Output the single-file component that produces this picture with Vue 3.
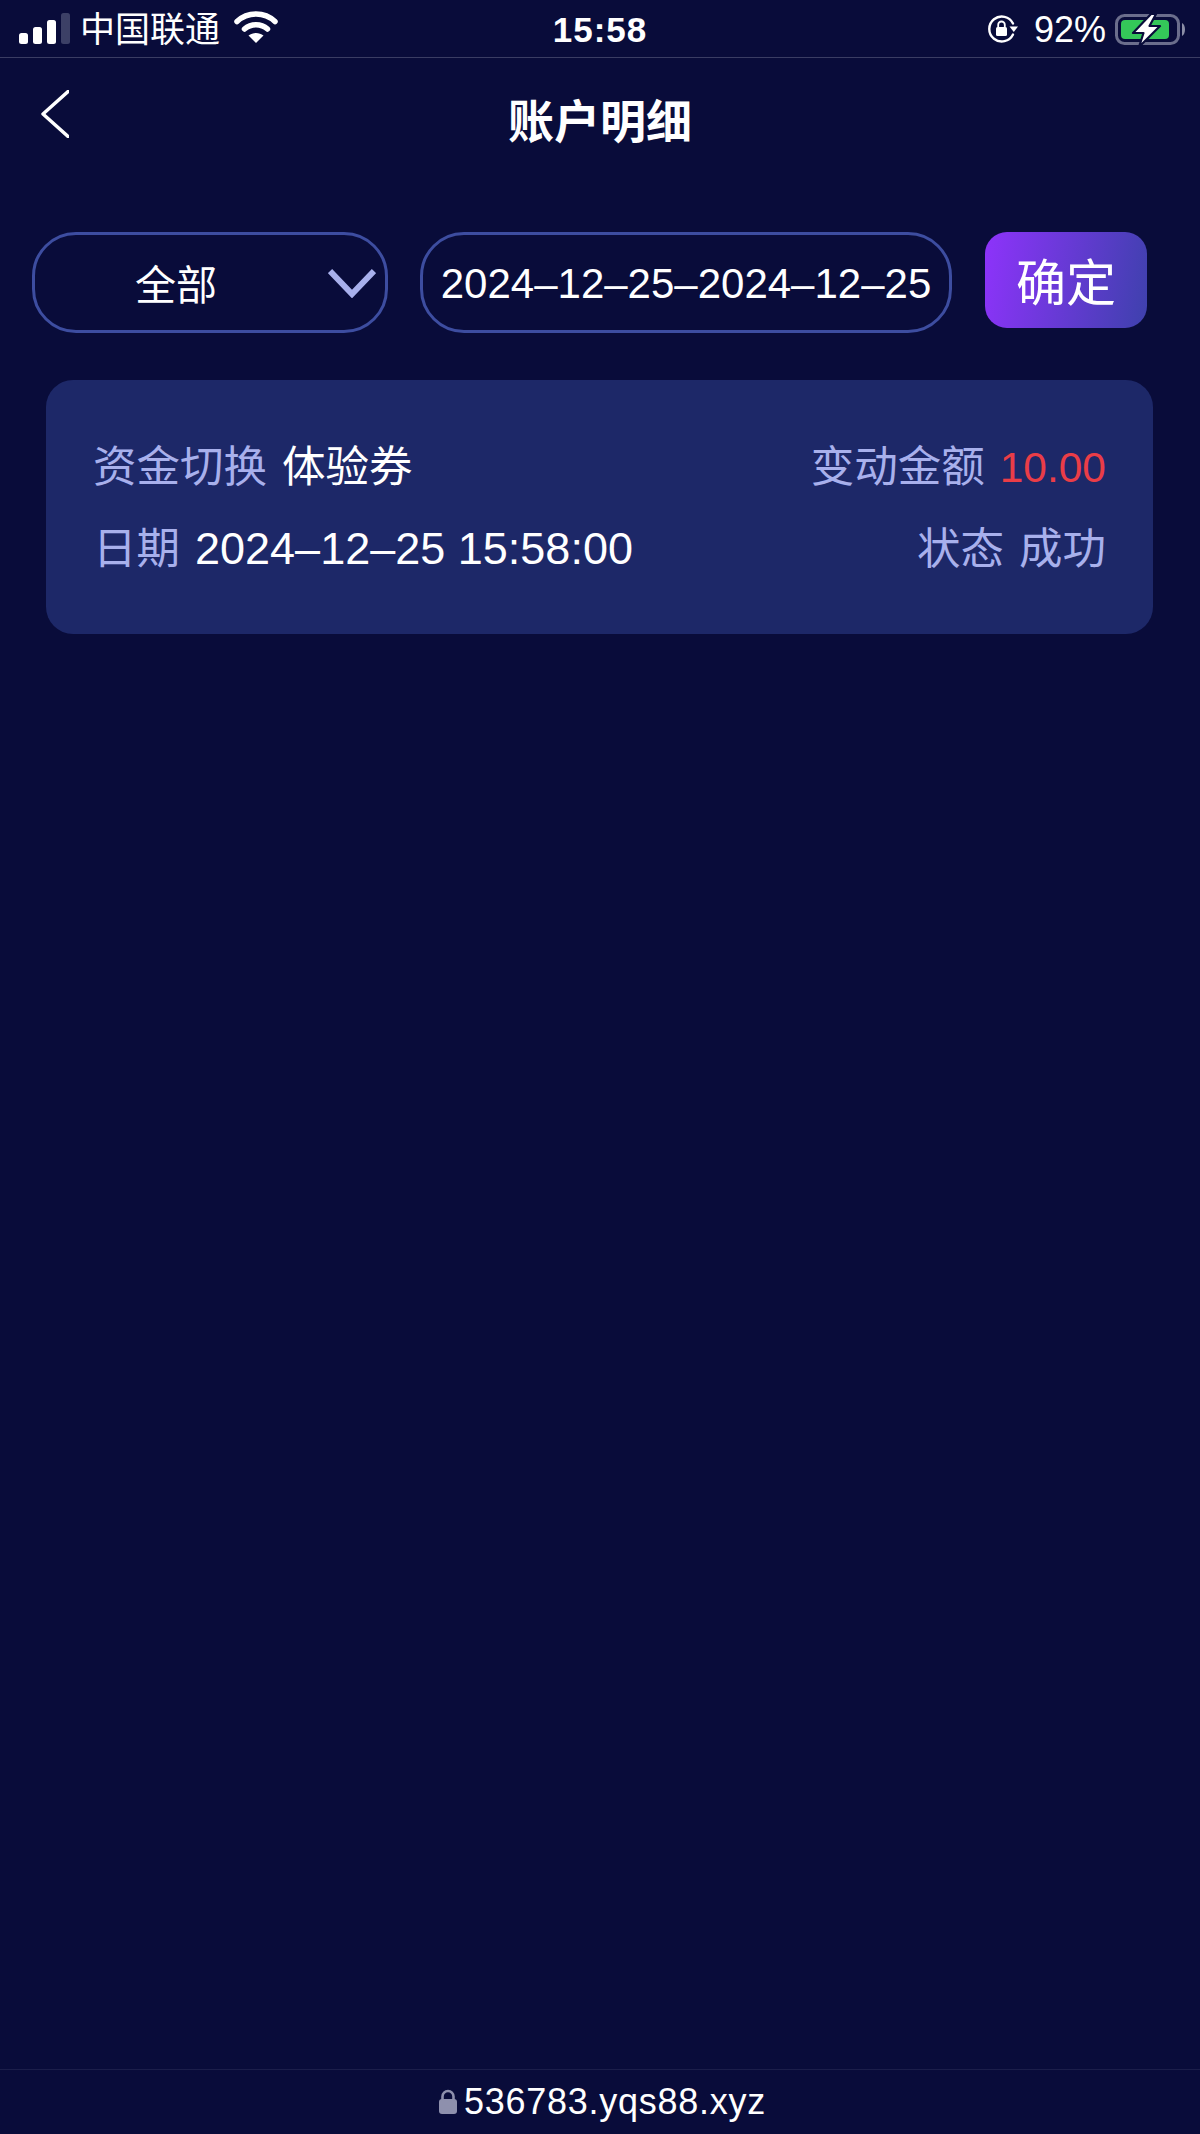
<template>
  <div class="page">
    <div class="status_bar">
      <div class="status_left">
        <svg class="signal" width="52" height="32" viewBox="0 0 52 32">
          <rect x="0" y="20" width="9" height="11" rx="2.5" fill="#fff" />
          <rect x="14" y="14" width="9" height="17" rx="2.5" fill="#fff" />
          <rect x="28" y="7" width="9" height="24" rx="2.5" fill="#fff" />
          <rect x="42" y="0" width="9" height="31" rx="2.5" fill="#3c4066" />
        </svg>
        <span class="carrier">中国联通</span>
        <svg class="wifi" width="44" height="34" viewBox="0 0 44 34">
          <path d="M3 11.5C13.5 1.5 30.5 1.5 41 11.5" fill="none" stroke="#fff" stroke-width="5.5" stroke-linecap="round" />
          <path d="M10.5 19C17 13.2 27 13.2 33.5 19" fill="none" stroke="#fff" stroke-width="5.5" stroke-linecap="round" />
          <path d="M22 33L14.5 25.5C18.8 22 25.2 22 29.5 25.5Z" fill="#fff" />
        </svg>
      </div>
      <div class="status_time">15:58</div>
      <div class="status_right">
        <svg class="rotate" width="32" height="30" viewBox="0 0 32 30">
          <path d="M26 20.5A12.5 12.5 0 1 1 26 9.5" fill="none" stroke="#fff" stroke-width="2.4" stroke-linecap="round" />
          <path d="M22.5 12.5L31 12.5L26.8 18Z" fill="#fff" />
          <rect x="9" y="13" width="11" height="9" rx="1.5" fill="#fff" />
          <path d="M11.2 13.5V10.8A3.3 3.3 0 0 1 17.8 10.8V13.5" fill="none" stroke="#fff" stroke-width="1.8" />
        </svg>
        <span class="percent">92%</span>
        <svg class="battery" width="72" height="36" viewBox="0 0 72 36">
          <rect x="1.5" y="3.5" width="62" height="28" rx="8" fill="none" stroke="#6b6e8c" stroke-width="3" />
          <rect x="6" y="8" width="48" height="19" rx="4" fill="#34c759" />
          <path d="M67 11C71 13 71 22 67 24Z" fill="#8b8ea6" />
          <path d="M36 2L18 21H28.5L24 35L45 14H34.5L41 2Z" fill="#fff" stroke="#090c3a" stroke-width="2.2" stroke-linejoin="round" />
        </svg>
      </div>
    </div>

    <div class="nav">
      <svg class="back" width="28" height="48" viewBox="0 0 28 48">
        <polyline points="27,1.5 2,24 27,46.5" fill="none" stroke="#fff" stroke-width="3.4" stroke-linecap="round" stroke-linejoin="round" />
      </svg>
      <div class="title">账户明细</div>
    </div>

    <div class="filter">
      <div class="select">
        <span class="select_text">全部</span>
        <svg class="arrow" width="48" height="30" viewBox="0 0 48 30">
          <polyline points="2,3 24,26 46,3" fill="none" stroke="#a8b0ec" stroke-width="6" />
        </svg>
      </div>
      <div class="date">{{ dateRange }}</div>
      <div class="confirm"><span class="confirm_text">确定</span></div>
    </div>

    <div class="card">
      <div class="row row_first">
        <div><span class="label">资金切换</span><span class="value">体验券</span></div>
        <div><span class="label">变动金额</span><span class="value red">10.00</span></div>
      </div>
      <div class="row row_second">
        <div><span class="label">日期</span><span class="value time">2024–12–25 15:58:00</span></div>
        <div><span class="label">状态</span><span class="value label_color">成功</span></div>
      </div>
    </div>

    <div class="footer">
      <svg width="20" height="26" viewBox="0 0 20 26">
        <path d="M4.5 12V7.5A5.5 5.5 0 0 1 15.5 7.5V12" fill="none" stroke="#8e90ad" stroke-width="2.6" />
        <rect x="1" y="10" width="18" height="15" rx="3" fill="#8e90ad" />
      </svg>
      <span class="url">536783.yqs88.xyz</span>
    </div>
  </div>
</template>

<script setup>
// 日期中的连接符在参考图里较长，这里用 en dash
const dateRange = '2024–12–25–2024–12–25';
</script>

<style>
body {
  background-color: #090c3a;
}
</style>

<style scoped>
.page {
  display: flex;
  flex-direction: column;
  height: 2134px;
  background-color: #090c3a;
  color: #fff;
  font-family: "Liberation Sans", "Noto Sans CJK SC", sans-serif;
  overflow: hidden;
}

.status_bar {
  position: relative;
  display: flex;
  justify-content: space-between;
  align-items: center;
  height: 57px;
  padding: 0 13px 0 19px;
  border-bottom: 1px solid #3a3d63;
}
.status_left, .status_right {
  display: flex;
  align-items: center;
}
.carrier {
  margin-left: 9px;
  padding-top: 3px;
  font-size: 35px;
  line-height: 54px;
}
.wifi {
  margin-left: 14px;
  margin-top: -3px;
}
.status_time {
  position: absolute;
  left: 0;
  right: 0;
  top: 10px;
  text-align: center;
  font-size: 35px;
  font-weight: 700;
  letter-spacing: 1px;
}
.percent {
  margin: 2px 9px 0 15px;
  font-size: 36px;
}
.battery {
  margin-top: 2px;
}

.nav {
  position: relative;
  height: 122px;
  display: flex;
  justify-content: center;
  align-items: center;
}
.back {
  position: absolute;
  left: 41px;
  top: 32px;
}
.title {
  margin-top: -2px;
  font-size: 46px;
  font-weight: 700;
}

.filter {
  display: flex;
  align-items: flex-start;
  margin-top: 52px;
  padding-left: 32px;
}
.select, .date {
  box-sizing: border-box;
  height: 101px;
  border: 3px solid #3d4da0;
  border-radius: 44px;
  display: flex;
  align-items: center;
}
.select {
  position: relative;
  width: 356px;
  padding-left: 100px;
  padding-bottom: 2px;
  font-size: 41px;
}
.arrow {
  position: absolute;
  right: 9px;
  top: 33px;
}
.date {
  width: 532px;
  margin-left: 32px;
  justify-content: center;
  font-size: 42px;
  padding-top: 2px;
}
.confirm {
  width: 162px;
  height: 96px;
  margin-left: 33px;
  border-radius: 22px;
  background: linear-gradient(100deg, #8e33fb, #3e41ad);
  display: flex;
  justify-content: center;
  align-items: center;
  font-size: 50px;
}
.confirm_text {
  margin-top: -3px;
}

.card {
  box-sizing: border-box;
  width: 1107px;
  height: 254px;
  margin: 47px 0 0 46px;
  padding: 41px 47px 0;
  border-radius: 27px;
  background-color: #1d2868;
}
.row {
  display: flex;
  justify-content: space-between;
  align-items: center;
  box-sizing: border-box;
  height: 81px;
  font-size: 43.5px;
}
.row_first {
  padding-top: 3px;
}
.row_second {
  padding-top: 5px;
}
.label, .label_color {
  color: #a8b0ec;
}
.value {
  margin-left: 15px;
}
.time {
  font-size: 45px;
}
.red {
  font-size: 42.5px;
  color: #ea3d47;
}

.footer {
  margin-top: auto;
  height: 64px;
  padding-left: 4px;
  border-top: 1px solid #1b1e4a;
  display: flex;
  justify-content: center;
  align-items: center;
  gap: 6px;
}
.url {
  font-size: 36px;
  letter-spacing: 0.75px;
}
</style>
